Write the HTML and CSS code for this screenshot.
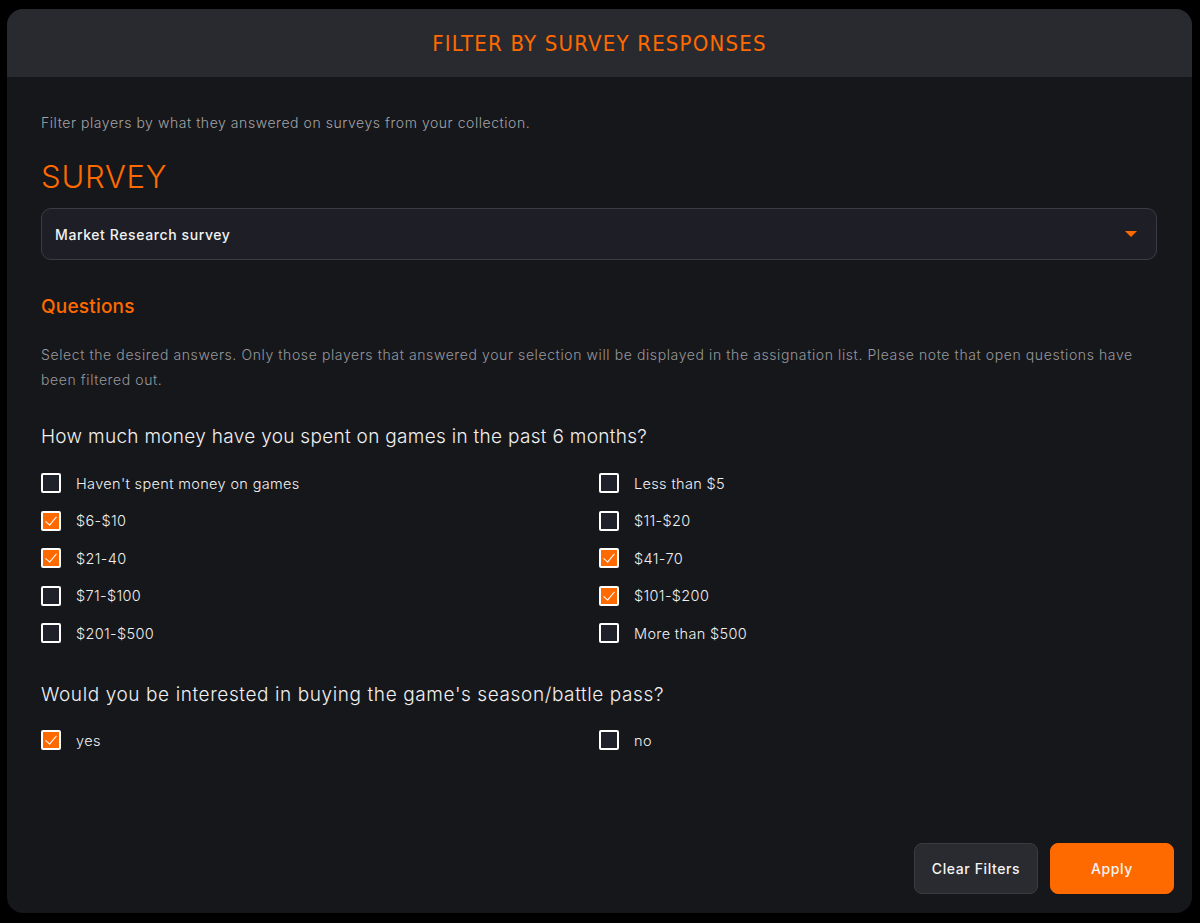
FILE: index.html
```html
<!DOCTYPE html>
<html lang="en">

<head>
    <meta charset="UTF-8">
    <meta name="viewport" content="width=device-width, initial-scale=1.0">
    <title>Filter by survey responses</title>
    <link rel="stylesheet" href="styles.css">
</head>

<body>
    <div class="modal">
        <div class="modal_head">
            <h1>FILTER BY SURVEY RESPONSES</h1>
        </div><!-- .modal_head end -->

        <div class="modal_body">
            <p class="intro">Filter players by what they answered on surveys from your collection.</p>

            <h2 class="survey_title">SURVEY</h2>
            <div class="select">
                <span>Market Research survey</span>
                <i class="caret"></i>
            </div>

            <h3 class="questions_title">Questions</h3>
            <p class="hint">Select the desired answers. Only those players that answered your selection will be displayed in the assignation list. Please note that open questions have been filtered out.</p>

            <h4 class="question">How much money have you spent on games in the past 6 months?</h4>
            <ul class="answers">
                <li><span class="box"></span>Haven't spent money on games</li>
                <li><span class="box"></span>Less than $5</li>
                <li><span class="box on"></span>$6-$10</li>
                <li><span class="box"></span>$11-$20</li>
                <li><span class="box on"></span>$21-40</li>
                <li><span class="box on"></span>$41-70</li>
                <li><span class="box"></span>$71-$100</li>
                <li><span class="box on"></span>$101-$200</li>
                <li><span class="box"></span>$201-$500</li>
                <li><span class="box"></span>More than $500</li>
            </ul>

            <h4 class="question q2">Would you be interested in buying the game's season/battle pass?</h4>
            <ul class="answers short">
                <li><span class="box on"></span>yes</li>
                <li><span class="box"></span>no</li>
            </ul>
        </div><!-- .modal_body end -->

        <div class="modal_foot">
            <button class="btn btn_clear">Clear Filters</button>
            <button class="btn btn_apply">Apply</button>
        </div><!-- .modal_foot end -->
    </div><!-- .modal end -->
</body>

</html>
```

FILE: styles.css
```css
* {
    margin: 0;
    padding: 0;
    box-sizing: border-box;
}

li {
    list-style: none;
}

body {
    background-color: #000;
    font-family: Inter, "Noto Sans", sans-serif;
    color: #ececec;
}

.modal {
    width: 1185px;
    height: 904px;
    margin: 9px 0 0 7px;
    background-color: #16171b;
    border-radius: 16px;
    overflow: hidden;
    display: flex;
    flex-direction: column;
}

.modal_head {
    height: 68px;
    background-color: #292a2f;
    display: flex;
    align-items: center;
    justify-content: center;
}

.modal_head h1 {
    font-family: "DejaVu Sans", sans-serif;
    font-stretch: condensed;
    font-weight: normal;
    font-size: 22px;
    color: #ff6a00;
    letter-spacing: 1.2px;
}

.modal_body {
    padding: 36px 35px 0 34px;
}

.intro {
    font-size: 14px;
    line-height: 20px;
    font-weight: 300;
    letter-spacing: 0.55px;
    color: #a3a3a6;
}

.survey_title {
    margin-top: 24px;
    font-size: 31px;
    line-height: 40px;
    font-weight: 300;
    color: #ff6a00;
    letter-spacing: 0.8px;
}

.select {
    margin-top: 11px;
    height: 52px;
    border: 1px solid #3b3d45;
    border-radius: 10px;
    background-color: #1e1f26;
    display: flex;
    align-items: center;
    justify-content: space-between;
    padding: 0 19px 0 13px;
    font-size: 14px;
    font-weight: 500;
    letter-spacing: 0.6px;
    color: #f2f2f2;
}

.select .caret {
    width: 0;
    height: 0;
    border-left: 6px solid transparent;
    border-right: 6px solid transparent;
    border-top: 6px solid #ff6a00;
}

.questions_title {
    margin-top: 34px;
    font-size: 19px;
    line-height: 26px;
    font-weight: 500;
    letter-spacing: 0.2px;
    color: #ff6a00;
}

.hint {
    margin-top: 22px;
    font-size: 14px;
    line-height: 25px;
    font-weight: 300;
    letter-spacing: 0.6px;
    color: #98989b;
}

.question {
    margin-top: 32px;
    font-size: 19px;
    line-height: 26px;
    font-weight: 300;
    letter-spacing: 0.3px;
    color: #f0f0f0;
}

.question.q2 {
    margin-top: 39px;
    letter-spacing: 0.6px;
}

.answers {
    margin-top: 23px;
    display: grid;
    grid-template-columns: 1fr 1fr;
    row-gap: 17.5px;
}

.answers.short {
    margin-top: 22px;
}

.answers li {
    display: flex;
    align-items: center;
    gap: 15px;
    height: 20px;
    font-size: 14.5px;
    font-weight: 300;
    letter-spacing: 0.35px;
    color: #f0f0f0;
}

.box {
    position: relative;
    width: 20px;
    height: 20px;
    border: 2px solid #fff;
    border-radius: 2px;
    background-color: #1e202a;
    flex-shrink: 0;
}

.box.on {
    background-color: #ff6a00;
}

/* check mark */
.box.on::after {
    content: "";
    position: absolute;
    left: 5px;
    top: 1px;
    width: 5px;
    height: 10px;
    border-right: 1.5px solid #fff;
    border-bottom: 1.5px solid #fff;
    transform: rotate(40deg);
}

.modal_foot {
    margin-top: auto;
    display: flex;
    justify-content: flex-end;
    gap: 12px;
    padding: 0 18px 19px 0;
}

.btn {
    width: 124px;
    height: 51px;
    border-radius: 8px;
    font-family: Inter, "Noto Sans", sans-serif;
    font-size: 14px;
    font-weight: 500;
    letter-spacing: 0.6px;
    color: #f4f4f4;
    cursor: pointer;
}

.btn_clear {
    background-color: #2a2b31;
    border: 1px solid #3b3c42;
}

.btn_apply {
    background-color: #ff6a00;
    border: 1px solid #ff6a00;
}
```
